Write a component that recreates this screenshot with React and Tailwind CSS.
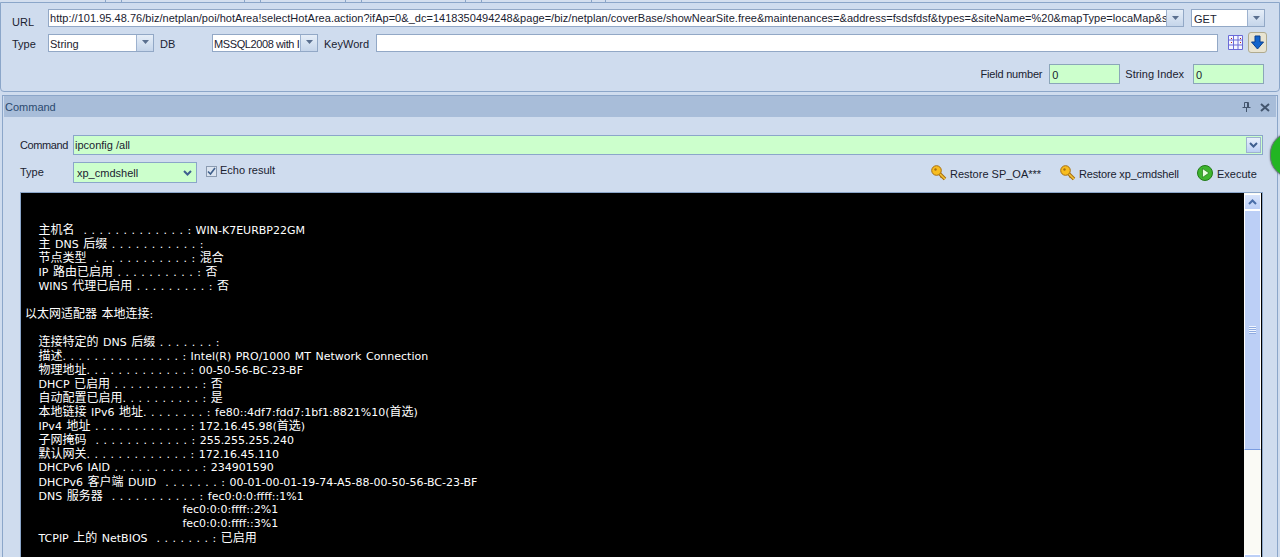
import React from "react";

const consoleLines = [
  "   主机名  . . . . . . . . . . . . . : WIN-K7EURBP22GM",
  "   主 DNS 后缀 . . . . . . . . . . . :",
  "   节点类型  . . . . . . . . . . . . : 混合",
  "   IP 路由已启用 . . . . . . . . . . : 否",
  "   WINS 代理已启用 . . . . . . . . . : 否",
  " ",
  "以太网适配器 本地连接:",
  " ",
  "   连接特定的 DNS 后缀 . . . . . . . :",
  "   描述. . . . . . . . . . . . . . . : Intel(R) PRO/1000 MT Network Connection",
  "   物理地址. . . . . . . . . . . . . : 00-50-56-BC-23-BF",
  "   DHCP 已启用 . . . . . . . . . . . : 否",
  "   自动配置已启用. . . . . . . . . . : 是",
  "   本地链接 IPv6 地址. . . . . . . . : fe80::4df7:fdd7:1bf1:8821%10(首选)",
  "   IPv4 地址 . . . . . . . . . . . . : 172.16.45.98(首选)",
  "   子网掩码  . . . . . . . . . . . . : 255.255.255.240",
  "   默认网关. . . . . . . . . . . . . : 172.16.45.110",
  "   DHCPv6 IAID . . . . . . . . . . . : 234901590",
  "   DHCPv6 客户端 DUID  . . . . . . . : 00-01-00-01-19-74-A5-88-00-50-56-BC-23-BF",
  "   DNS 服务器  . . . . . . . . . . . : fec0:0:0:ffff::1%1",
  "                                   fec0:0:0:ffff::2%1",
  "                                   fec0:0:0:ffff::3%1",
  "   TCPIP 上的 NetBIOS  . . . . . . . : 已启用",
];

const url =
  "http://101.95.48.76/biz/netplan/poi/hotArea!selectHotArea.action?ifAp=0&_dc=1418350494248&page=/biz/netplan/coverBase/showNearSite.free&maintenances=&address=fsdsfdsf&types=&siteName=%20&mapType=locaMap&s";

const tabs = [106, 16, 123, 16, 85, 16, 104, 16, 110, 14];

const Arrow = () => (
  <svg width="9" height="5" viewBox="0 0 9 5">
    <path d="M1 0h7L4.500 4z" fill="#5a6f8f" />
  </svg>
);

const ComboBtn = () => (
  <div className="w-[17px] h-full flex items-center justify-center border-l border-[#9db2cf] bg-gradient-to-b from-[#e6eef8] to-[#c5d5ea] shrink-0">
    <Arrow />
  </div>
);

const Combo = ({ value, className }) => (
  <div className={`h-[18px] flex border border-[#92a8c6] bg-white ${className}`}>
    <div className="flex-1 overflow-hidden whitespace-nowrap pl-[1px] pt-[1px] leading-[17px]">{value}</div>
    <ComboBtn />
  </div>
);

const Chevron = () => (
  <svg width="9" height="7" viewBox="0 0 9 7">
    <path d="M1 1l3.500 3.500L8 1" fill="none" stroke="#3f5f8f" strokeWidth="2" />
  </svg>
);

const Key = () => (
  <svg width="16" height="16" viewBox="0 0 16 16" className="shrink-0">
    <path d="M7.500 7.500l6.500 6.500" stroke="#a86f10" strokeWidth="3.500" fill="none" />
    <path d="M11 11l-1.500 1.500M13.500 12.500l-1.500 1.500" stroke="#a86f10" strokeWidth="2" fill="none" />
    <path d="M7.500 7.500l6.500 6.500" stroke="#f4c63c" strokeWidth="1.500" fill="none" />
    <circle cx="5.500" cy="5.500" r="4.800" fill="#f7bd20" stroke="#a86f10" />
    <circle cx="4.500" cy="4.500" r="1.200" fill="#a86f10" />
  </svg>
);

// wider CJK glyphs than the latin text around them
const ConsoleLine = ({ text }) => (
  <div className="h-[14px]">
    {text.split(/([\u4e00-\u9fff]+)/).map((part, i) =>
      i % 2 ? (
        <span key={i} className="text-[12px]">
          {part}
        </span>
      ) : (
        <span key={i}>{part}</span>
      )
    )}
  </div>
);

export default function App() {
  return (
    <div className="relative h-[557px] w-[1280px] overflow-hidden bg-[#cfdcee] text-[11px] text-[#1a2230] font-['Liberation_Sans','Noto_Sans_CJK_SC',sans-serif]">
      <div className="h-[2px] flex bg-[#d4dfef]">
        {tabs.map((w, i) => (
          <div key={i} className="border-r border-[#8aa5c8]" style={{ width: w }} />
        ))}
      </div>

      <div className="h-[90px] border border-[#8ba6c9] rounded-b-sm">
        <div className="flex items-center h-[18px] mt-[6px] ml-[11px]">
          <span className="w-[36px] pt-[8px]">URL</span>
          <div className="w-[1136px] h-[18px] flex border border-[#92a8c6] bg-white">
            <div className="flex-1 overflow-hidden whitespace-nowrap pl-[1px] leading-[17px] tracking-[0.025px]">{url}</div>
            <ComboBtn />
          </div>
          <Combo value="GET" className="w-[74px] ml-[7px] pl-[1px]" />
        </div>

        <div className="flex items-center h-[19px] mt-[6px] ml-[11px]">
          <span className="w-[36px] pt-[3px]">Type</span>
          <Combo value="String" className="w-[106px]" />
          <span className="ml-[6px] w-[52px] pt-[3px]">DB</span>
          <Combo value="MSSQL2008 with I" className="w-[106px] tracking-[-0.4px]" />
          <span className="ml-[6px] w-[52px] pt-[3px]">KeyWord</span>
          <div className="w-[842px] h-[18px] border border-[#92a8c6] bg-white" />
          <svg width="15" height="15" viewBox="0 0 15 15" className="ml-[10px]">
            <path d="M.5.500h14v14H.500zM.5 5h14M.5 10h14M5.500.500v14M10 .500v14" fill="#f4f6ff" stroke="#6a6ad8" />
            <path d="M3 3h1v1H3zM12 3h1v1h-1zM12 7h1v1h-1zM3 7h1v1H3z" fill="#b02020" />
          </svg>
          <div className="ml-[5px] w-[19px] h-[21px] rounded-[3px] border border-[#b0ab90] bg-[#e8e4d2] flex items-center justify-center">
            <svg width="13" height="15" viewBox="0 0 13 15">
              <path d="M4 1h5v6h3.500L6.500 14 .5 7H4z" fill="#1264cc" stroke="#0a3f8f" />
            </svg>
          </div>
        </div>

        <div className="flex items-center justify-end h-[20px] mt-[12px] pr-[15px]">
          <span className="pt-[1px] tracking-[-0.2px]">Field number</span>
          <div className="w-[71px] h-[20px] ml-[7px] border border-[#8ba6b9] bg-[#ccffcc] pl-[2px] pt-[1px] leading-[19px]">0</div>
          <span className="ml-[5px] pt-[1px]">String Index</span>
          <div className="w-[71px] h-[20px] ml-[9px] border border-[#8ba6b9] bg-[#ccffcc] pl-[2px] pt-[1px] leading-[19px]">0</div>
        </div>
      </div>

      <div className="mt-[3px] ml-[2px] mr-[2px] h-[470px] border border-[#8ba6c9] pl-[1px] pr-[1px]">
        <div className="h-[21px] bg-[#a8bdd9] flex items-center pl-[1px] pr-[6px] pt-[1px] text-[#2b4a6f]">
          <span className="flex-1">Command</span>
          <svg width="9" height="10" viewBox="0 0 9 10" className="mr-[9px]">
            <path d="M2.500.500h4v5h-4zM.5 5.500h8M4.500 5.500V10M5.500 1v4" fill="none" stroke="#44566e" />
          </svg>
          <svg width="10" height="9" viewBox="0 0 10 9">
            <path d="M1 1l8 7M9 1L1 8" stroke="#44566e" strokeWidth="2" />
          </svg>
        </div>

        <div className="flex items-center h-[20px] mt-[18px] ml-[16px] mr-[13px]">
          <span className="w-[53px] shrink-0 tracking-[-0.4px]">Command</span>
          <div className="flex-1 h-[20px] flex items-center border border-[#8ba6c9] bg-[#ccffcc] pl-[1px] pr-[1px]">
            <span className="flex-1">ipconfig /all</span>
            <div className="w-[15px] h-[16px] flex items-center justify-center border border-[#9db2cf] bg-gradient-to-b from-[#e8f0fc] to-[#bcd0f4]">
              <Chevron />
            </div>
          </div>
        </div>

        <div className="flex items-center h-[21px] mt-[7px] ml-[16px] mr-[13px]">
          <span className="w-[53px] shrink-0">Type</span>
          <div className="w-[124px] h-[21px] flex items-center justify-between border border-[#8ba6c9] bg-[#ccffcc] pl-[3px] pr-[4px] pt-[1px]">
            <span>xp_cmdshell</span>
            <Chevron />
          </div>
          <div className="ml-[9px] w-[11px] h-[11px] mb-[3px] border border-[#8a9ab0] bg-[#dbe4f0] flex items-center justify-center">
            <svg width="9" height="9" viewBox="0 0 9 9">
              <path d="M1 4.500l2.500 2.500L8 1" fill="none" stroke="#40608c" strokeWidth="1.600" />
            </svg>
          </div>
          <span className="ml-[3px] mb-[4px]">Echo result</span>
          <div className="flex-1" />
          <Key />
          <span className="ml-[3px] w-[110px] pt-[3px]">Restore SP_OA***</span>
          <Key />
          <span className="ml-[3px] w-[118px] pt-[3px] tracking-[-0.15px]">Restore xp_cmdshell</span>
          <svg width="16" height="16" viewBox="0 0 16 16">
            <circle cx="8" cy="8" r="7.500" fill="#3eb52e" stroke="#237a1a" />
            <path d="M5.500 3.500L12 8l-6.500 4.500z" fill="#e8ffe0" stroke="#237a1a" strokeWidth=".7" />
          </svg>
          <span className="ml-[4px] w-[46px] pt-[3px]">Execute</span>
        </div>

        <div className="mt-[9px] ml-[16px] mr-[13px] h-[370px] border border-[#8ba6c9] flex bg-black">
          <div className="flex-1 pt-[30px] pl-[4px] text-[11px] leading-[14px] text-white overflow-hidden whitespace-pre [word-spacing:1px] font-['DejaVu_Sans','Noto_Sans_CJK_SC',sans-serif]">
            {consoleLines.map((line, i) => (
              <ConsoleLine key={i} text={line} />
            ))}
          </div>
          <div className="w-[17px] flex flex-col mr-[1px] bg-[#fafaf5]">
            <div className="h-[16px] mt-[1px] flex items-center justify-center border border-white bg-gradient-to-b from-[#d8e4fb] to-[#bccff6]">
              <svg width="9" height="7" viewBox="0 0 9 7">
                <path d="M1 5l3.500-3.500L8 5" fill="none" stroke="#4a6ea8" strokeWidth="2" />
              </svg>
            </div>
            <div className="h-[240px] border border-white border-b-[#7a9ce0] bg-[#bccff6] flex items-center justify-center">
              <div className="w-[7px] h-[8px] bg-[repeating-linear-gradient(to_bottom,#f0f5ff_0,#f0f5ff_1px,#8fabe0_1px,#8fabe0_2px)]" />
            </div>
            <div className="h-[104px]" />
            <div className="flex-1 border border-white bg-[#bccff6]" />
          </div>
        </div>
      </div>

      {/* green button that sticks out at the right edge */}
      <div className="absolute left-[1270px] top-[132px] w-[44px] h-[46px] rounded-full bg-[#22b522] border border-[#5f7f6f] shadow-[0_0_2px_#667]" />
    </div>
  );
}
